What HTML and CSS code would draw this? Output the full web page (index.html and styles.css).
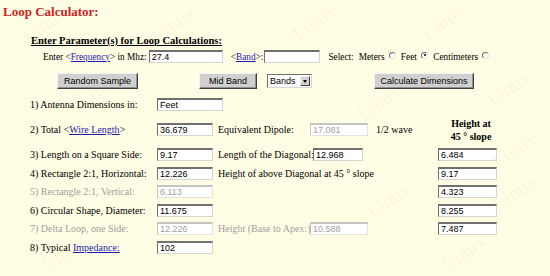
FILE: index.html
```html
<!DOCTYPE html>
<html lang="en">
<head>
    <meta charset="UTF-8">
    <title>Loop Calculator</title>
    <link rel="stylesheet" href="styles.css">
</head>
<body>
    <div class="page">
        <h1 class="title">Loop Calculator:</h1>
        <h2 class="heading">Enter Parameter(s) for Loop Calculations:</h2>

        <!-- Frequency / band / units -->
        <div class="freq-row">
            <span>Enter &lt;<a href="#">Frequency</a>&gt; in Mhz:</span>
            <input class="box freq" type="text" value="27.4">
            <span class="band-label">&lt;<a href="#">Band</a>&gt;:</span>
            <input class="box band" type="text" value="">
            <span class="select-label">Select:</span>
            <span class="unit">Meters <span class="radio"></span></span>
            <span class="unit">Feet <span class="radio checked"></span></span>
            <span class="unit">Centimeters <span class="radio"></span></span>
        </div>

        <div class="button-row">
            <button class="btn random">Random Sample</button>
            <button class="btn mid">Mid Band</button>
            <div class="dropdown">Bands<span class="arrow"></span></div>
            <button class="btn calc">Calculate Dimensions</button>
        </div>

        <!-- Results -->
        <div class="calc-grid">
            <span class="label">1) Antenna Dimensions in:</span>
            <input class="box units" type="text" value="Feet">

            <span class="label">2) Total &lt;<a href="#">Wire Length</a>&gt;</span>
            <input class="box" type="text" value="36.679">
            <span class="label c3">Equivalent Dipole:</span>
            <input class="box off c4" type="text" value="17.081">
            <span class="label c5">1/2 wave</span>
            <div class="height-head">Height at<br>45 &deg; slope</div>

            <span class="label">3) Length on a Square Side:</span>
            <input class="box" type="text" value="9.17">
            <span class="label c3">Length of the Diagonal:</span>
            <input class="box diag c4" type="text" value="12.968">
            <input class="box high c6" type="text" value="6.484">

            <span class="label">4) Rectangle 2:1, Horizontal:</span>
            <input class="box" type="text" value="12.226">
            <span class="label wide">Height of above Diagonal at 45 &deg; slope</span>
            <input class="box high c6" type="text" value="9.17">

            <span class="label grey">5) Rectangle 2:1, Vertical:</span>
            <input class="box off" type="text" value="6.113">
            <input class="box high c6" type="text" value="4.323">

            <span class="label">6) Circular Shape, Diameter:</span>
            <input class="box" type="text" value="11.675">
            <input class="box high c6" type="text" value="8.255">

            <span class="label grey">7) Delta Loop, one Side:</span>
            <input class="box off" type="text" value="12.226">
            <span class="label grey c3">Height (Base to Apex:)</span>
            <input class="box off c4" type="text" value="10.588">
            <input class="box high c6" type="text" value="7.487">

            <span class="label">8) Typical <a href="#">Impedance:</a></span>
            <input class="box" type="text" value="102">
        </div>
    </div>

    <!-- Faint photo host watermark over the page -->
    <div class="watermark">
        <span class="wm wm-1">Linux</span>
        <span class="wm wm-2">Linux</span>
        <span class="wm wm-3">Linux</span>
        <span class="wm wm-4">Linux</span>
        <span class="wm wm-5">Linux</span>
        <span class="wm wm-6">Linux</span>
        <span class="wm wm-7">Linux</span>
        <span class="wm wm-8">Linux</span>
        <span class="wm wm-9">Linux</span>
        <span class="wm wm-10">Linux</span>
        <span class="wm wm-11">Linux</span>
        <span class="wm wm-12">Linux</span>
    </div>
</body>
</html>
```

FILE: styles.css
```css
/* General Styles */
body {
    margin: 0;
    background-color: #fffde4;
    font-family: "Liberation Serif", "Times New Roman", serif;
    font-size: 10px;
    color: #000;
}

.page {
    padding: 4px 0 0 3px;
}

a {
    color: #1c1cb0;
    text-decoration: underline;
}

.title {
    margin: 0;
    font-size: 13px;
    line-height: 15px;
    font-weight: bold;
    color: #cf2424;
}

.heading {
    margin: 15px 0 0 28px;
    font-size: 10.5px;
    line-height: 13px;
    font-weight: bold;
    text-decoration: underline;
}

/* Inputs */
.box {
    box-sizing: border-box;
    width: 56px;
    height: 13px;
    margin: 0;
    padding: 0 0 0 2px;
    font-family: "Liberation Sans", Arial, sans-serif;
    font-size: 9px;
    color: #000;
    background-color: #fff;
    border-style: solid;
    border-width: 2px 1px 1px 1px;
    border-color: #707070 #d6d6d0 #d6d6d0 #707070;
    outline: none;
}

.box.off {
    color: #a0a0a0;
    border-color: #c4c4c0 #e2e2de #e2e2de #c4c4c0;
}

/* Frequency row */
.freq-row {
    display: flex;
    align-items: center;
    height: 13px;
    margin: 3px 0 0 40px;
    font-size: 9.3px;
    white-space: nowrap;
}

.freq {
    width: 74px;
    margin-left: 2px;
}

.band-label {
    margin-left: 8px;
}

.band {
    width: 56px;
    margin-left: 1px;
}

.select-label {
    margin-left: 8px;
}

.unit {
    margin-left: 5px;
}

.radio {
    display: inline-block;
    box-sizing: border-box;
    width: 7px;
    height: 7px;
    margin-left: 2px;
    vertical-align: 1px;
    border-radius: 50%;
    border: 1px solid;
    border-color: #6a6a6a #e0e0e0 #e0e0e0 #6a6a6a;
    background-color: #fff;
    position: relative;
}

.radio.checked::after {
    content: "";
    position: absolute;
    left: 1.5px;
    top: 1.5px;
    width: 2px;
    height: 2px;
    border-radius: 50%;
    background-color: #000;
}

/* Buttons row */
.button-row {
    display: flex;
    align-items: center;
    height: 16px;
    margin: 10px 0 0 54px;
}

.btn {
    box-sizing: border-box;
    height: 16px;
    padding: 0;
    font-family: "Liberation Sans", Arial, sans-serif;
    font-size: 9px;
    color: #000;
    background-color: #d0d0d0;
    border: 1px solid;
    border-color: #f4f4f4 #404040 #404040 #f4f4f4;
    box-shadow: inset -1px -1px 0 #909090;
}

.random {
    width: 81px;
}

.mid {
    width: 58px;
    margin-left: 61px;
}

.calc {
    width: 100px;
    margin-left: 62px;
}

.dropdown {
    box-sizing: border-box;
    display: flex;
    align-items: center;
    justify-content: space-between;
    width: 45px;
    height: 14px;
    margin-left: 10px;
    padding: 0 1px 0 2px;
    font-family: "Liberation Sans", Arial, sans-serif;
    font-size: 9px;
    background-color: #fff;
    border: 1px solid;
    border-color: #707070 #d6d6d0 #d6d6d0 #707070;
}

.arrow {
    box-sizing: border-box;
    width: 10px;
    height: 10px;
    background-color: #d0d0d0;
    border: 1px solid;
    border-color: #f4f4f4 #404040 #404040 #f4f4f4;
    position: relative;
}

.arrow::after {
    content: "";
    position: absolute;
    left: 1.5px;
    top: 3px;
    border-left: 2.5px solid transparent;
    border-right: 2.5px solid transparent;
    border-top: 3px solid #000;
}

/* Results grid */
.calc-grid {
    display: grid;
    grid-template-columns: 127px 61px 92px 62px 66px 60px;
    grid-template-rows: 13px 26px repeat(6, 13px);
    row-gap: 5.5px;
    align-items: center;
    margin: 9px 0 0 27px;
}

.label {
    grid-column: 1;
    line-height: 13px;
    white-space: nowrap;
}

.calc-grid .box {
    grid-column: 2;
}

.calc-grid .units {
    width: 66px;
}

.calc-grid .c3 {
    grid-column: 3;
}

.calc-grid .c4 {
    grid-column: 4;
    width: 58px;
}

.calc-grid .diag {
    width: 50px;
    margin-left: 3px;
}

.calc-grid .c5 {
    grid-column: 5;
    padding-left: 4px;
}

.calc-grid .c6 {
    grid-column: 6;
    width: 59px;
}

.calc-grid .wide {
    grid-column: 3 / 6;
}

.grey {
    color: #a0a0a0;
}

.height-head {
    grid-column: 6;
    font-weight: bold;
    font-size: 10px;
    line-height: 13px;
    text-align: center;
    padding-left: 6px;
}

/* Watermark overlay */
.watermark {
    position: absolute;
    left: 0;
    top: 0;
    width: 550px;
    height: 276px;
    overflow: hidden;
    pointer-events: none;
}

.wm {
    position: absolute;
    font-family: "Liberation Serif", serif;
    font-size: 20px;
    line-height: 20px;
    color: rgba(150, 140, 90, 0.07);
    transform: rotate(-35deg);
}

.wm-1 { left: 20px; top: 14px; }
.wm-2 { left: 150px; top: 14px; }
.wm-3 { left: 290px; top: 12px; }
.wm-4 { left: 420px; top: 12px; }
.wm-5 { left: 75px; top: 78px; }
.wm-6 { left: 355px; top: 92px; }
.wm-7 { left: 485px; top: 78px; }
.wm-8 { left: 490px; top: 140px; }
.wm-9 { left: 365px; top: 190px; }
.wm-10 { left: 490px; top: 182px; }
.wm-11 { left: 40px; top: 242px; }
.wm-12 { left: 440px; top: 242px; }
```
